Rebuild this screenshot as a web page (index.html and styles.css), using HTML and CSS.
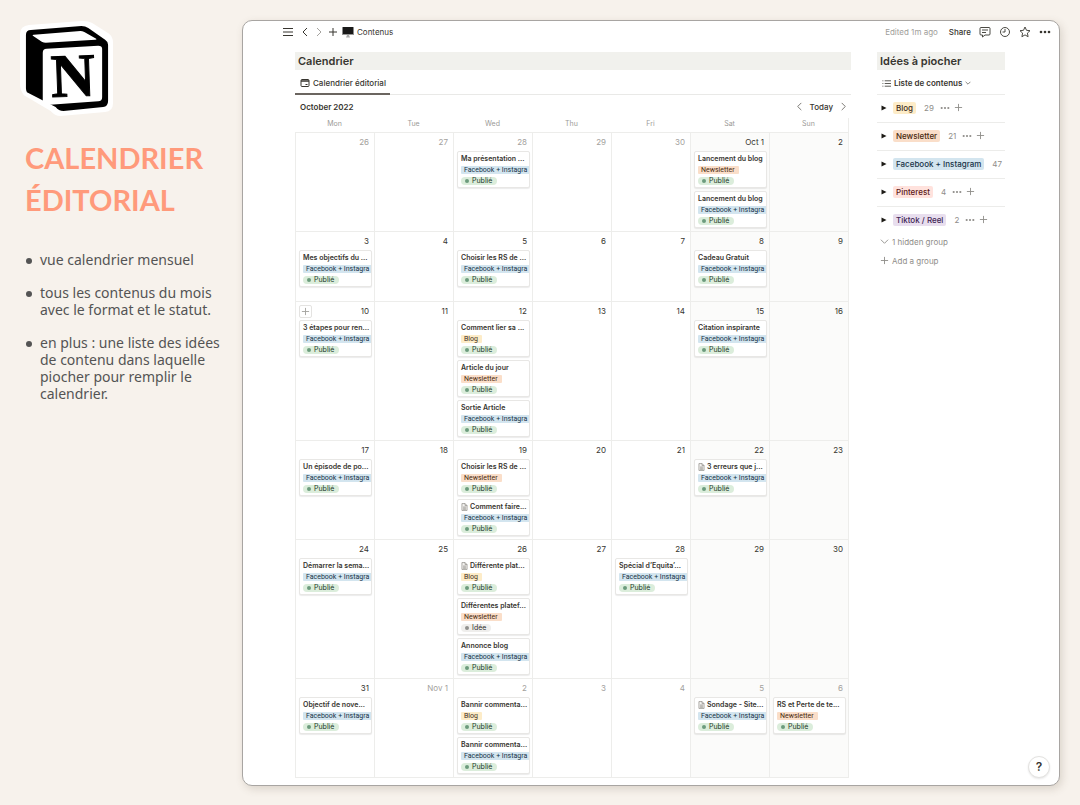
FILE: index.html
```html
<!DOCTYPE html>
<html lang="fr">
<head>
<meta charset="utf-8">
<meta name="viewport" content="width=device-width, initial-scale=1">
<title>Calendrier éditorial</title>
<link rel="stylesheet" href="styles.css">
</head>
<body>
<svg class="defs" width="0" height="0" aria-hidden="true">
  <symbol id="doc" viewBox="0 0 12 14"><path d="M1.500 1h5.500l3.500 3.500V13h-9z M7 1v3.500h3.500 M3.500 7h5 M3.500 9h5 M3.500 11h5" fill="#f4f3f1" stroke="#8b8983" stroke-width="1.200"/></symbol>
  <symbol id="plus" viewBox="0 0 10 10"><path d="M5 1v8M1 5h8" fill="none" stroke="currentColor"/></symbol>
  <symbol id="left" viewBox="0 0 10 10"><path d="M7 1 3 5l4 4" fill="none" stroke="currentColor"/></symbol>
  <symbol id="right" viewBox="0 0 10 10"><path d="M3 1l4 4-4 4" fill="none" stroke="currentColor"/></symbol>
  <symbol id="down" viewBox="0 0 10 10"><path d="M1 3l4 4 4-4" fill="none" stroke="currentColor"/></symbol>
  <symbol id="dots" viewBox="0 0 12 10"><g fill="currentColor"><circle cx="2" cy="5" r="1.300"/><circle cx="6" cy="5" r="1.300"/><circle cx="10" cy="5" r="1.300"/></g></symbol>
  <symbol id="tri" viewBox="0 0 6 6"><path d="M.5.5 5.500 3 .5 5.500z" fill="#1d1b16"/></symbol>
</svg>
<div class="page">
  <aside class="intro">
    <svg class="logo" viewBox="0 0 96 98" role="img" aria-label="Notion">
      <path d="M9 5 62 1q6-.5 11 2l17 11q4 3 4 9v61q0 8-8 9l-45 4q-6 0-10-5L4 76q-4-5-4-11V14q0-8 9-9z" fill="#fff"/>
      <path d="M11 10 62 6q4 0 7 2l17 12q3 2 3 5v57q0 5-5 6l-40 4q-5 0-8-4L7 73q-1-2-1-4V15q0-5 5-5z" fill="#000"/>
      <path d="M14 15 61 11q2 0 4 1l12 7q1 1-1 1l-50 3q-2 0-4-1l-9-6q-1-1 1-1z" fill="#fff"/>
      <path d="M27 29 79 26q4 0 4 3v49q0 4-4 4l-52 4q-4 0-4-4V33q0-4 4-4z" fill="#fff"/>
      <text class="logo-letter" x="31" y="77" transform="rotate(-2 53 56)">N</text>
    </svg>
    <h1 class="title">CALENDRIER<br>ÉDITORIAL</h1>
    <ul class="points">
      <li>vue calendrier mensuel</li>
      <li>tous les contenus du mois avec le format et le statut.</li>
      <li>en plus : une liste des idées de contenu dans laquelle piocher pour remplir le calendrier.</li>
    </ul>
  </aside>

  <main class="window">
    <header class="topbar">
      <div class="bar-left">
        <button class="icon-btn menu" aria-label="Menu"><svg class="i12" viewBox="0 0 12 12"><path d="M1 2.500h10M1 6h10M1 9.500h10" stroke="currentColor"/></svg></button>
        <button class="icon-btn" aria-label="Précédent"><svg class="i10"><use href="#left"/></svg></button>
        <button class="icon-btn pale" aria-label="Suivant"><svg class="i10"><use href="#right"/></svg></button>
        <button class="icon-btn" aria-label="Nouveau"><svg class="i10"><use href="#plus"/></svg></button>
        <a class="crumb" href="#"><svg class="i12" viewBox="0 0 12 12"><rect x=".5" y="1" width="11" height="8" rx=".5" fill="#191919"/><path d="M1 8.500h10" stroke="#999"/><path d="M5 9h2l1 2.500H4z" fill="#aaa"/></svg>Contenus</a>
      </div>
      <span class="edited">Edited 1m ago</span>
      <button class="share">Share</button>
      <button class="icon-btn" aria-label="Commentaires"><svg class="i12" viewBox="0 0 12 12" fill="none" stroke="currentColor" stroke-width=".9"><path d="M2 1.500h8q1 0 1 1V8q0 1-1 1H6L3.500 11V9H2Q1 9 1 8V2.500q0-1 1-1zM3 4h6M3 6.500h4"/></svg></button>
      <button class="icon-btn" aria-label="Historique"><svg class="i12" viewBox="0 0 12 12" fill="none" stroke="currentColor" stroke-width=".9"><circle cx="6" cy="6" r="4.500"/><path d="M6 3v3H3.500"/></svg></button>
      <button class="icon-btn" aria-label="Favori"><svg class="i12" viewBox="0 0 12 12" fill="none" stroke="currentColor" stroke-width=".9"><path d="m6 1 1.500 3.300 3.500.4-2.600 2.400.7 3.600L6 8.900l-3.100 1.800.7-3.600L1 4.700l3.500-.4z"/></svg></button>
      <button class="icon-btn" aria-label="Plus"><svg class="i12"><use href="#dots"/></svg></button>
    </header>

    <div class="content">
      <section class="calendar">
        <h2>Calendrier</h2>
        <nav class="tabs"><a class="tab" href="#"><svg class="i10" viewBox="0 0 10 10" fill="none" stroke="currentColor"><rect x="1" y="1.500" width="8" height="7" rx="1"/><path d="M1 3h8" stroke-width="1.500"/><path d="M5.500 6.500h2"/></svg>Calendrier éditorial</a></nav>
        <div class="month">
          <strong>October 2022</strong>
          <button class="icon-btn mid" aria-label="Mois précédent"><svg class="i9"><use href="#left"/></svg></button>
          <button class="today">Today</button>
          <button class="icon-btn mid" aria-label="Mois suivant"><svg class="i9"><use href="#right"/></svg></button>
        </div>
        <table class="grid">
          <thead><tr><th>Mon</th><th>Tue</th><th>Wed</th><th>Thu</th><th>Fri</th><th>Sat</th><th>Sun</th></tr></thead>
          <tbody>
            <tr>
              <td class="out"><p class="day">26</p></td>
              <td class="out"><p class="day">27</p></td>
              <td class="out"><p class="day">28</p>
                <article class="card"><h3>Ma présentation ...</h3><span class="tag blue">Facebook + Instagra</span><span class="status">Publié</span></article></td>
              <td class="out"><p class="day">29</p></td>
              <td class="out"><p class="day">30</p></td>
              <td><p class="day">Oct 1</p>
                <article class="card"><h3>Lancement du blog</h3><span class="tag orange">Newsletter</span><span class="status">Publié</span></article>
                <article class="card"><h3>Lancement du blog</h3><span class="tag blue">Facebook + Instagra</span><span class="status">Publié</span></article></td>
              <td><p class="day">2</p></td>
            </tr>
            <tr>
              <td><p class="day">3</p>
                <article class="card"><h3>Mes objectifs du ...</h3><span class="tag blue">Facebook + Instagra</span><span class="status">Publié</span></article></td>
              <td><p class="day">4</p></td>
              <td><p class="day">5</p>
                <article class="card"><h3>Choisir les RS de ...</h3><span class="tag blue">Facebook + Instagra</span><span class="status">Publié</span></article></td>
              <td><p class="day">6</p></td>
              <td><p class="day">7</p></td>
              <td><p class="day">8</p>
                <article class="card"><h3>Cadeau Gratuit</h3><span class="tag blue">Facebook + Instagra</span><span class="status">Publié</span></article></td>
              <td><p class="day">9</p></td>
            </tr>
            <tr>
              <td><div class="day with-add"><button class="add" aria-label="Ajouter"><svg class="i9"><use href="#plus"/></svg></button>10</div>
                <article class="card"><h3>3 étapes pour ren...</h3><span class="tag blue">Facebook + Instagra</span><span class="status">Publié</span></article></td>
              <td><p class="day">11</p></td>
              <td><p class="day">12</p>
                <article class="card"><h3>Comment lier sa ...</h3><span class="tag yellow">Blog</span><span class="status">Publié</span></article>
                <article class="card"><h3>Article du jour</h3><span class="tag orange">Newsletter</span><span class="status">Publié</span></article>
                <article class="card"><h3>Sortie Article</h3><span class="tag blue">Facebook + Instagra</span><span class="status">Publié</span></article></td>
              <td><p class="day">13</p></td>
              <td><p class="day">14</p></td>
              <td><p class="day">15</p>
                <article class="card"><h3>Citation inspirante</h3><span class="tag blue">Facebook + Instagra</span><span class="status">Publié</span></article></td>
              <td><p class="day">16</p></td>
            </tr>
            <tr>
              <td><p class="day">17</p>
                <article class="card"><h3>Un épisode de po...</h3><span class="tag blue">Facebook + Instagra</span><span class="status">Publié</span></article></td>
              <td><p class="day">18</p></td>
              <td><p class="day">19</p>
                <article class="card"><h3>Choisir les RS de ...</h3><span class="tag orange">Newsletter</span><span class="status">Publié</span></article>
                <article class="card"><h3><svg class="doc"><use href="#doc"/></svg>Comment faire...</h3><span class="tag blue">Facebook + Instagra</span><span class="status">Publié</span></article></td>
              <td><p class="day">20</p></td>
              <td><p class="day">21</p></td>
              <td><p class="day">22</p>
                <article class="card"><h3><svg class="doc"><use href="#doc"/></svg>3 erreurs que j...</h3><span class="tag blue">Facebook + Instagra</span><span class="status">Publié</span></article></td>
              <td><p class="day">23</p></td>
            </tr>
            <tr>
              <td><p class="day">24</p>
                <article class="card"><h3>Démarrer la sema...</h3><span class="tag blue">Facebook + Instagra</span><span class="status">Publié</span></article></td>
              <td><p class="day">25</p></td>
              <td><p class="day">26</p>
                <article class="card"><h3><svg class="doc"><use href="#doc"/></svg>Différente plat...</h3><span class="tag yellow">Blog</span><span class="status">Publié</span></article>
                <article class="card"><h3>Différentes platef...</h3><span class="tag orange">Newsletter</span><span class="status idea">Idée</span></article>
                <article class="card"><h3>Annonce blog</h3><span class="tag blue">Facebook + Instagra</span><span class="status">Publié</span></article></td>
              <td><p class="day">27</p></td>
              <td><p class="day">28</p>
                <article class="card"><h3>Spécial d’Equita’...</h3><span class="tag blue">Facebook + Instagra</span><span class="status">Publié</span></article></td>
              <td><p class="day">29</p></td>
              <td><p class="day">30</p></td>
            </tr>
            <tr>
              <td><p class="day">31</p>
                <article class="card"><h3>Objectif de nove...</h3><span class="tag blue">Facebook + Instagra</span><span class="status">Publié</span></article></td>
              <td class="out"><p class="day">Nov 1</p></td>
              <td class="out"><p class="day">2</p>
                <article class="card"><h3>Bannir commenta...</h3><span class="tag yellow">Blog</span><span class="status">Publié</span></article>
                <article class="card"><h3>Bannir commenta...</h3><span class="tag blue">Facebook + Instagra</span><span class="status">Publié</span></article></td>
              <td class="out"><p class="day">3</p></td>
              <td class="out"><p class="day">4</p></td>
              <td class="out"><p class="day">5</p>
                <article class="card"><h3><svg class="doc"><use href="#doc"/></svg>Sondage - Site...</h3><span class="tag blue">Facebook + Instagra</span><span class="status">Publié</span></article></td>
              <td class="out"><p class="day">6</p>
                <article class="card"><h3>RS et Perte de te...</h3><span class="tag orange">Newsletter</span><span class="status">Publié</span></article></td>
            </tr>
          </tbody>
        </table>
      </section>

      <section class="ideas">
        <h2>Idées à piocher</h2>
        <button class="view"><svg class="i9" viewBox="0 0 10 10"><path d="M3 2h7M3 5h7M3 8h7M.5 2h1M.5 5h1M.5 8h1" stroke="currentColor" stroke-width=".9"/></svg>Liste de contenus<svg class="i6"><use href="#down"/></svg></button>
        <ul class="groups">
          <li><svg class="i6"><use href="#tri"/></svg><span class="label yellow">Blog</span><span class="count">29</span><svg class="i10"><use href="#dots"/></svg><svg class="i9"><use href="#plus"/></svg></li>
          <li><svg class="i6"><use href="#tri"/></svg><span class="label orange">Newsletter</span><span class="count">21</span><svg class="i10"><use href="#dots"/></svg><svg class="i9"><use href="#plus"/></svg></li>
          <li><svg class="i6"><use href="#tri"/></svg><span class="label blue">Facebook + Instagram</span><span class="count">47</span></li>
          <li><svg class="i6"><use href="#tri"/></svg><span class="label red">Pinterest</span><span class="count">4</span><svg class="i10"><use href="#dots"/></svg><svg class="i9"><use href="#plus"/></svg></li>
          <li><svg class="i6"><use href="#tri"/></svg><span class="label purple">Tiktok / Reel</span><span class="count">2</span><svg class="i10"><use href="#dots"/></svg><svg class="i9"><use href="#plus"/></svg></li>
        </ul>
        <button class="more"><svg class="i9"><use href="#down"/></svg>1 hidden group</button>
        <button class="more"><svg class="i9"><use href="#plus"/></svg>Add a group</button>
      </section>
    </div>
    <button class="help" aria-label="Aide">?</button>
  </main>
</div>
</body>
</html>
```

FILE: styles.css
```css
* { box-sizing: border-box; }
body { margin: 0; background: #f7f2ec; font-family: Inter, "Liberation Sans", sans-serif; color: #37352f; }
h1, h2, h3, p, ul { margin: 0; padding: 0; }
button { font: inherit; color: inherit; background: none; border: 0; padding: 0; cursor: pointer; }
a { color: inherit; text-decoration: none; }
svg { display: block; flex: none; }
.defs { position: absolute; }
.i6 { width: 6px; height: 6px; }
.i9 { width: 9px; height: 9px; }
.i10 { width: 10px; height: 10px; }
.i12 { width: 12px; height: 12px; }

.page { display: grid; grid-template-columns: 222px minmax(0, 1fr); column-gap: 20px; padding: 20px 20px 19px 0; }

.intro { padding-left: 20px; }
.logo { width: 95px; height: 97px; }
.logo-letter { font: bold 62px "Liberation Serif", serif; stroke: #000; stroke-width: 1; }
.title { margin-top: 20px; padding-left: 5px; font: bold 29px/42px Lato, sans-serif; color: #ff9a7b; }
.points { margin-top: 30px; padding-left: 20px; display: flex; flex-direction: column; gap: 16px; font: 14px/17px "Noto Sans", sans-serif; color: #545454; list-style: none; }
.points li { position: relative; }
.points li::before { content: ""; position: absolute; left: -14px; top: 7px; width: 6px; height: 6px; border-radius: 50%; background: #545454; }

.window { position: relative; background: #fff; border: 1px solid #a8a5a2; border-radius: 10px; box-shadow: 2px 3px 8px rgba(90, 70, 50, .18); padding-bottom: 7px; }
.topbar { display: flex; align-items: center; gap: 8px; height: 22px; padding: 0 8px 0 39px; font-size: 8px; }
.bar-left { display: flex; align-items: center; gap: 4px; margin-right: auto; }
.pale { color: #a5a39f; }
.menu { margin-right: 2px; }
.crumb { display: flex; align-items: center; gap: 3px; }
.edited { color: #a09e9a; }
.share { margin: 0 0 0 3px; font-weight: 500; }

.content { display: grid; grid-template-columns: minmax(0, 1fr) 128px; column-gap: 26px; padding: 9px 54px 0 52px; }
h2 { height: 18px; padding-left: 3px; background: #f1f1ed; font-size: 11px; line-height: 18px; font-weight: 600; }
.tabs { display: flex; height: 25px; border-bottom: 1px solid #e9e9e7; }
.tab { display: flex; align-items: center; gap: 3px; height: 25px; padding: 3px 4px 0 5px; border-bottom: 2px solid #6b6560; font-size: 8px; font-weight: 500; }
.month { display: flex; align-items: center; gap: 6px; height: 23px; padding: 0 3px 0 5px; font-size: 8px; font-weight: 500; }
.month strong { margin-right: auto; font-weight: 600; }
.mid { color: #6f6d68; }

.grid { width: calc(100% - 2px); table-layout: fixed; border-collapse: separate; border-spacing: 0; border-right: 1px solid #ededeb; border-bottom: 1px solid #ededeb; }
.grid th { height: 14px; padding: 0; font-size: 7px; line-height: 12px; font-weight: 400; vertical-align: top; color: #9b9a97; }
.grid td { height: 70px; padding: 0 2px 0 3px; vertical-align: top; border-top: 1px solid #ededeb; border-left: 1px solid #ededeb; }
.grid td:nth-child(n+6) { background: #fbfbfa; }
.day { height: 18px; padding-right: 3px; font-size: 8px; line-height: 18px; text-align: right; }
.out .day { color: #a3a19d; }
.with-add { display: flex; align-items: center; justify-content: space-between; }
.add { width: 13px; height: 13px; display: grid; place-items: center; border: 1px solid #e4e3e1; border-radius: 2px; color: #a3a19d; }
.card { height: 37px; margin-bottom: 3px; padding: 2px 0 2px 3px; overflow: hidden; display: flex; flex-direction: column; align-items: flex-start; gap: 2px; background: #fff; border: 1px solid #e8e7e5; border-radius: 2px; box-shadow: 0 1px 1px rgba(15, 15, 15, .08); white-space: nowrap; }
.card h3 { display: flex; align-items: center; gap: 2px; font-size: 7px; line-height: 10px; font-weight: 600; }
.doc { width: 7px; height: 8px; }
.tag { height: 8px; padding: 0 4px 0 3px; border-radius: 1px; font-family: Roboto, sans-serif; font-size: 7px; line-height: 8px; }
.tag.blue { align-self: stretch; padding-right: 0; border-radius: 1px 0 0 1px; }
.status { display: flex; align-items: center; gap: 3px; height: 8px; margin-top: 1px; padding: 0 5px 0 4px; border-radius: 4px; background: #dbeddb; color: #1c3829; font-size: 7px; line-height: 8px; }
.status::before { content: ""; width: 4px; height: 4px; border-radius: 50%; background: #6c9b7d; }
.idea { background: #efeeec; color: #32302c; }
.idea::before { background: #91918e; }
.blue { background: #d3e5ef; color: #183347; }
.orange { background: #fadec9; color: #49290e; }
.yellow { background: #fdecc8; color: #402c1b; }
.red { background: #ffe2dd; color: #5d1715; }
.purple { background: #e8deee; color: #412454; }

.view { display: flex; align-items: center; gap: 3px; width: 100%; height: 25px; padding: 2px 0 0 5px; border-bottom: 1px solid #ececea; font-size: 8px; font-weight: 600; white-space: nowrap; }
.groups { list-style: none; color: #8f8d89; font-size: 8px; }
.groups li { display: flex; align-items: center; height: 28px; padding: 0 0 2px 4px; border-bottom: 1px solid #ececea; white-space: nowrap; }
.groups li:last-child { height: 25px; padding-bottom: 0; border-bottom: 0; }
.label { margin-left: 6px; padding: 0 3px; border-radius: 2px; font-weight: 500; line-height: 12px; }
.count { margin: 0 6px 0 8px; }
.groups .i9 { margin-left: 4px; }
.more { display: flex; align-items: center; gap: 3px; height: 19px; padding-left: 3px; color: #8f8d89; font-size: 8px; }

.help { position: absolute; right: 9px; bottom: 7px; width: 22px; height: 22px; border: 1px solid #e3e2e0; border-radius: 50%; background: #fff; box-shadow: 0 1px 2px rgba(15, 15, 15, .1); font-size: 12px; font-weight: 600; line-height: 20px; }
```
